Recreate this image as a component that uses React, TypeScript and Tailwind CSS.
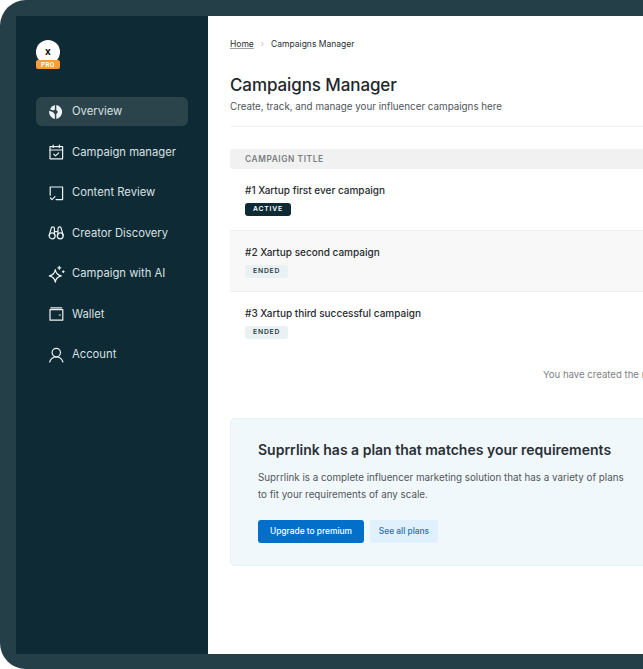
import React from "react";

const stroke = { fill: "none", stroke: "currentColor", strokeWidth: 1.2, strokeLinecap: "round", strokeLinejoin: "round" } as const;

const icons: Record<string, React.ReactNode> = {
  overview: (
    <svg width="16" height="16" viewBox="0 0 16 16" fill="currentColor">
      <path d="M6.9 1.1A7 7 0 0 0 2 5.3L5.4 6.6 6.9 5.4Z" />
      <path d="M1.2 6.8A7 7 0 0 0 6.9 14.9V10.4L5.2 8.2Z" />
      <path d="M8.3 1.1a7 7 0 0 1 0 13.8V10L10 8 8.3 6Z" />
    </svg>
  ),
  calendar: (
    <svg width="16" height="16" viewBox="0 0 16 16" {...stroke}>
      <rect x="2" y="2.6" width="12.6" height="12.2" />
      <path d="M2 6h12.6M5.2 1v2.4M11.4 1v2.4M5.8 10.2l1.7 1.7 3.2-3" />
    </svg>
  ),
  review: (
    <svg width="16" height="16" viewBox="0 0 16 16" {...stroke}>
      <path d="M2.2 10.2V2h12.4v12.6H8" />
      <path d="M2.4 13l1.6 1.6 3-3" />
    </svg>
  ),
  binoculars: (
    <svg width="16" height="16" viewBox="0 0 16 16" {...stroke}>
      <circle cx="4.2" cy="10.8" r="3" />
      <circle cx="12.2" cy="10.8" r="3" />
      <path d="M1.2 10.5 3.2 3.4a1.6 1.6 0 0 1 3.2.2V10M15.2 10.5l-2-7.1a1.6 1.6 0 0 0-3.2.2V10M6.6 6.6h3.2" />
    </svg>
  ),
  sparkle: (
    <svg width="16" height="16" viewBox="0 0 16 16" className="overflow-visible" {...stroke}>
      <path d="M7.3 3.6C7.8 7.2 9 8.9 13.3 9.9 9 10.9 7.8 12.6 7.3 16.2 6.8 12.6 5.6 10.9 1.3 9.9 5.6 8.9 6.8 7.2 7.3 3.6Z" />
      <path d="M11.3.3v3M9.8 1.8h3M15.3 4.8v1.6M14.5 5.6h1.6" />
    </svg>
  ),
  wallet: (
    <svg width="16" height="16" viewBox="0 0 16 16" {...stroke}>
      <path d="M2.8 1.8h11" />
      <rect x="2" y="3.6" width="12.8" height="10.6" />
      <path d="M11.2 9h1.2" />
    </svg>
  ),
  account: (
    <svg width="16" height="16" viewBox="0 0 16 16" {...stroke}>
      <circle cx="8.3" cy="5.6" r="4.2" />
      <path d="M1.7 15c1-3.2 3.4-5 6.6-5s5.6 1.8 6.6 5" />
    </svg>
  ),
};

const nav = [
  { key: "overview", label: "Overview", active: true },
  { key: "calendar", label: "Campaign manager" },
  { key: "review", label: "Content Review" },
  { key: "binoculars", label: "Creator Discovery" },
  { key: "sparkle", label: "Campaign with AI" },
  { key: "wallet", label: "Wallet" },
  { key: "account", label: "Account" },
];

const rows = [
  { title: "#1 Xartup first ever campaign", status: "ACTIVE", cls: "h-[60px] pt-[13px]" },
  { title: "#2 Xartup second campaign", status: "ENDED", cls: "h-[62px] pt-[14px] bg-[#f8f8f8] border-y border-[#efefef]" },
  { title: "#3 Xartup third successful campaign", status: "ENDED", cls: "h-[60px] pt-[14px]" },
];

export default function App() {
  return (
    <div className="h-[669px] w-[643px] overflow-hidden bg-white font-['Inter',sans-serif]">
      <div className="flex h-full rounded-l-[26px] bg-[#243f47] pb-[15px] pl-4 pt-4">
        <aside className="flex w-[192px] shrink-0 flex-col bg-[#0e2a34] px-5 pt-[24px] text-[#d9e0e2]">
          <div className="relative h-[24px] w-[24px]">
            <div className="flex h-[24px] w-[24px] items-center justify-center rounded-full bg-white pb-[2px] text-[10px] font-bold text-[#111]">x</div>
            <div className="absolute left-0 top-[20px] flex h-[9px] w-[24px] items-center justify-center rounded-[2px] bg-[#f59f36] text-[6px] font-bold tracking-[0.5px] text-white">PRO</div>
          </div>
          <nav className="mt-[33px] flex flex-col gap-[11.5px]">
            {nav.map((n) => (
              <div key={n.key} className={`flex h-[29px] items-center gap-[8px] rounded-[6px] pl-[12px] text-[11.25px] ${n.active ? "bg-[#2b444c]" : ""}`}>
                <span className="flex h-4 w-4 shrink-0 items-center justify-center text-[#eef2f3]">{icons[n.key]}</span>
                {n.label}
              </div>
            ))}
          </nav>
        </aside>
        <main className="w-[800px] shrink-0 bg-white pl-[22px] pt-[22px]">
          <div className="flex h-[12px] items-center text-[8.5px] text-[#2a2f33]">
            <span className="underline decoration-[#9a9ea1]">Home</span>
            <span className="mx-[7px] text-[#c2c5c8]">›</span>
            <span>Campaigns Manager</span>
          </div>
          <h1 className="mt-[23px] text-[17px] font-medium leading-[24px] tracking-[-0.1px] text-[#22272b]">Campaigns Manager</h1>
          <p className="mt-[2px] text-[9.8px] leading-[15px] text-[#50565a]">Create, track, and manage your influencer campaigns here</p>
          <div className="mt-[12px] h-px bg-[#f2f2f2]" />
          <div className="mt-[22px] flex h-[20px] items-center rounded-[3px] bg-[#f1f1f1] pl-[15px] pt-[1px] text-[8.3px] font-semibold tracking-[0.6px] text-[#7a7f82]">CAMPAIGN TITLE</div>
          <div className="mt-[1px]">
            {rows.map((r) => (
              <div key={r.title} className={`flex flex-col pl-[15px] ${r.cls}`}>
                <div className="text-[10px] font-medium leading-[14px] text-[#262b2f]">{r.title}</div>
                <div className={`mt-[6px] flex h-[13px] w-fit items-center rounded-[3px] px-[8px] text-[6.8px] font-semibold tracking-[0.8px] ${r.status === "ACTIVE" ? "bg-[#0e2a34] text-white" : "bg-[#e9f1f5] text-[#2a3d45]"}`}>{r.status}</div>
              </div>
            ))}
          </div>
          <p className="mt-[15px] whitespace-nowrap pl-[313px] text-[9.6px] leading-[15px] text-[#7d8285]">You have created the maximum number of campaigns</p>
          <section className="mt-[36px] h-[148px] rounded-[5px] border border-[#e8f1f6] bg-[#f1f8fc] pl-[27px] pt-[21px]">
            <h2 className="text-[14px] font-semibold leading-[20px] text-[#2a3035]">Suprrlink has a plan that matches your requirements</h2>
            <p className="mt-[9px] w-[375px] text-[9.8px] leading-[17px] text-[#50565a]">Suprrlink is a complete influencer marketing solution that has a variety of plans to fit your requirements of any scale.</p>
            <div className="mt-[17px] flex gap-[6px]">
              <button className="flex h-[23px] w-[106px] items-center justify-center rounded-[3px] bg-[#0270cb] text-[8.4px] font-medium text-white">Upgrade to premium</button>
              <button className="flex h-[23px] w-[68px] items-center justify-center rounded-[3px] bg-[#e0f0fc] text-[8.4px] font-medium text-[#2872b5]">See all plans</button>
            </div>
          </section>
        </main>
      </div>
    </div>
  );
}
